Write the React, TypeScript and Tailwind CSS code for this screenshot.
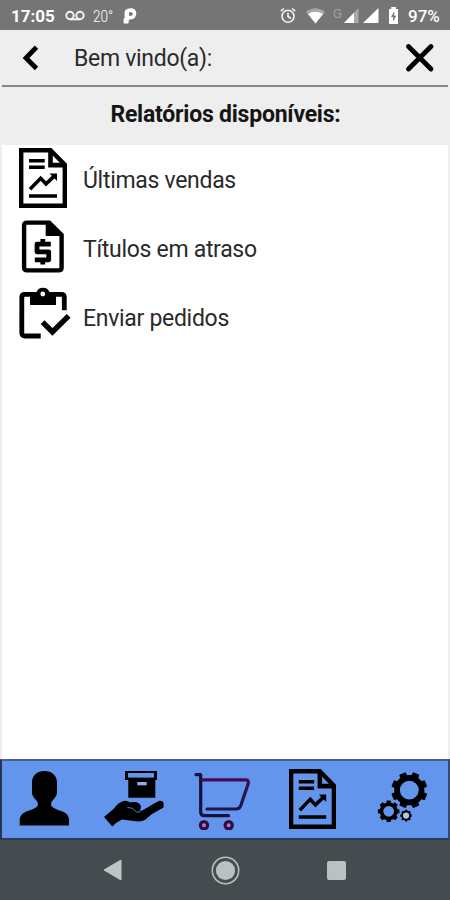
import React from 'react';

function StatusBar() {
  return (
    <div className="flex h-[30px] shrink-0 items-center bg-[#757575] pt-[2px] text-[17px] leading-none text-white">
      <span className="ml-[11px] w-[54px] font-bold">17:05</span>
      <svg className="w-[20px]" height="12" viewBox="0 0 20 12" fill="none" stroke="#f2f2f2" strokeWidth="2">
        <circle cx="5" cy="5.5" r="3.7" />
        <circle cx="15" cy="5.5" r="3.7" />
        <path d="M5 9.3H15" />
      </svg>
      <span className="ml-[8px] w-[30px] origin-left scale-x-[0.8] text-[17px] font-light">20°</span>
      <svg width="14" height="18" viewBox="0 0 14 18">
        <path d="M2.5 3Q5 .8 9 1.2Q13.6 2.2 13.3 7Q12.7 12 7.5 12.6H6L5.4 16.4H.6V12Q1.5 11.5 1.6 10V5Q1.7 3.8 2.5 3Z" fill="#fff" />
        <path d="M6 5.2H8A1.7 1.7 0 0 1 8 8.8H6Z" fill="#757575" />
      </svg>
      <svg className="ml-auto" width="16" height="18" viewBox="0 0 16 18" fill="none" stroke="#f4f4f4" strokeWidth="1.6">
        <circle cx="8" cy="9.3" r="6" />
        <path d="M.8 4.2L4 1.5M15.2 4.2L12 1.5M8 5.7V9.5L11 11.5" />
      </svg>
      <svg className="ml-[10px]" width="19" height="16" viewBox="0 0 19 16">
        <path d="M0 4Q9.5-3.5 19 4L9.5 15.5Z" fill="#a8a8a8" />
        <path d="M2 6Q9.5 1.5 17 6L9.5 15.5Z" fill="#fff" />
      </svg>
      <span className="ml-[8px] w-[11px] pb-[6px] text-[13px] text-[#a3a3a3]">G</span>
      <svg width="15" height="16" viewBox="0 0 15 16">
        <path d="M0 15L14.5 0V15Z" fill="#a8a8a8" />
        <path d="M0 15L10 4.7V15Z" fill="#fff" />
      </svg>
      <svg className="ml-[4px]" width="16" height="16" viewBox="0 0 16 16">
        <path d="M0 15L15.5 0V15Z" fill="#fff" />
      </svg>
      <svg className="ml-[9px]" width="11" height="18" viewBox="0 0 11 18">
        <path d="M3.2 0H7.8V2H10V17H1V2H3.2Z" fill="#fff" />
        <path d="M6.2 4.5L3 10H5.1V14.5L8.2 8.7H6.2Z" fill="#757575" />
      </svg>
      <span className="mr-[8px] ml-[9px] w-[34px] whitespace-nowrap text-[17px] font-medium">97%</span>
    </div>
  );
}

function ReportIcon({ className }: { className?: string }) {
  return (
    <svg className={className} width="48" height="60" viewBox="0 0 48 59" preserveAspectRatio="none" fill="none" stroke="#000" strokeWidth="4">
      <path d="M2.2 2.2H31.5L45.8 16.5V56.8H2.2Z" strokeWidth="4.4" />
      <path d="M31.5 3V16.8H45" strokeWidth="4.6" />
      <path d="M10 12.5H25.7M10 19H25.7M10 47.3H38" strokeWidth="3.4" />
      <path d="M11 40.5L21.7 29.8L27 35.3L35.5 27.5" strokeWidth="3.6" />
      <path d="M30.5 25H38V32.5Z" fill="#000" stroke="none" />
    </svg>
  );
}

function InvoiceIcon() {
  return (
    <svg width="44" height="54" viewBox="0 0 44 54" fill="none" stroke="#000" strokeWidth="4.4">
      <path d="M6 2.6H28.2L40.6 15V47.5Q40.6 50.4 37.7 50.4H6Q3.1 50.4 3.1 47.5V5.5Q3.1 2.6 6 2.6Z" />
      <path d="M24.7 2V16H41Z" fill="#000" stroke="none" />
      <path d="M29.8 24.2H16V31.8H27.7V39.8H13.8M21.8 19V24M21.8 39.5V44.4" strokeWidth="4.8" strokeLinejoin="round" />
    </svg>
  );
}

function ClipboardIcon() {
  return (
    <svg width="52" height="54" viewBox="0 0 52 54" fill="none" stroke="#000" strokeWidth="4.8">
      <path d="M21.7 49H6Q2.8 49 2.8 46V10.3Q2.8 7.3 6 7.3H42.3Q45.3 7.3 45.3 10.3V23.3" />
      <path d="M11 6H17.3A6.9 6.9 0 0 1 30.7 6H37V18H11Z" fill="#000" stroke="none" />
      <circle cx="23.8" cy="7" r="2.4" fill="#fff" stroke="none" />
      <path d="M23.6 35.2L33.4 45L49.7 28.8" strokeWidth="5.4" />
    </svg>
  );
}

function PersonIcon() {
  return (
    <svg width="52" height="60" viewBox="0 0 52 60">
      <path d="M25.3 1C33 1 38 5.5 38 12.5V23C37.5 27 34 29.5 32.2 32.5V35.5C34 39.5 44 40.5 47 43.5Q50 46 50 50V55.5H.7V50Q.8 46 4 43.5C7 40.5 17 39.5 18.8 35.5V32.5C17 29.5 13.5 27 13 23V12.5C13 5.5 18 1 25.3 1Z" />
    </svg>
  );
}

function HandBoxIcon() {
  return (
    <svg width="60" height="60" viewBox="0 0 60 60">
      <path d="M21 1H53V10H51.3V27.8H24.3V10H21Z" />
      <path d="M24 3H50V7.6H24Z" fill="#6495ed" />
      <path d="M33.3 12H42.7V15.3H33.3Z" fill="#8fb0e8" />
      <path d="M0 47L10 38.5L13 34.8Q17 31 22 30.7L26 32.2L32 32Q37 33.5 37 37L35.8 41.5L42.7 38L50 33.5L55.5 30.8Q59.5 30.5 59.6 34V37.5L48 44L41.5 49.5Q38 51.7 34 51.5L18 49.5L12 53L8.3 56.5Z" />
      <path d="M23.5 37.5L28.5 38.3L32.5 42L36 42" fill="none" stroke="#6495ed" strokeWidth=".8" />
    </svg>
  );
}

function CartIcon() {
  return (
    <svg width="58" height="60" viewBox="0 0 58 60" fill="none" strokeWidth="3.2" strokeLinecap="round" strokeLinejoin="round">
      <defs>
        <linearGradient id="basket" x1="8" y1="10" x2="14" y2="42" gradientUnits="userSpaceOnUse">
          <stop offset="0" stopColor="#480a58" />
          <stop offset="1" stopColor="#1c164c" />
        </linearGradient>
      </defs>
      <path d="M2 4.7H6.7V42Q6.7 45.7 10.3 45.7H34.5" stroke="#17113c" />
      <path d="M8 9.8H52Q55 10.1 54.2 13.8L46.8 35.5Q45.6 39 42.1 39H13" stroke="url(#basket)" />
      <g stroke="#330b42" strokeWidth="3.2" fill="#9b81d6">
        <circle cx="10" cy="55.2" r="3.6" />
        <circle cx="34.7" cy="55.2" r="3.6" />
      </g>
    </svg>
  );
}

function Gear({ cx, cy, outer, hole, offset, light }: { cx: number; cy: number; outer: number; hole: number; offset: number; light?: boolean }) {
  const body = outer * 0.84;
  return (
    <g transform={`translate(${cx} ${cy})`}>
      {Array.from({ length: 8 }, (_, i) => (
        <rect key={i} x={-outer * 0.2} y={-outer} width={outer * 0.4} height={outer * 0.4} rx={outer * 0.06} transform={`rotate(${i * 45 + offset})`} />
      ))}
      <circle r={(body + hole) / 2} fill={light ? '#b2c6df' : '#6495ed'} stroke="#000" strokeWidth={body - hole} />
    </g>
  );
}

function SettingsIcon() {
  return (
    <svg width="52" height="60" viewBox="0 0 52 60">
      <Gear cx={32.3} cy={20.2} outer={18} hole={9.4} offset={22.5} />
      <Gear cx={11.7} cy={41.3} outer={10.8} hole={5.4} offset={0} />
      <Gear cx={29.1} cy={45.6} outer={5.8} hole={3.1} offset={0} light />
    </svg>
  );
}

function ReportRow({ icon, label }: { icon: React.ReactNode; label: string }) {
  return (
    <li className="flex h-[69px] items-start">
      <span className="flex w-[81px] shrink-0">{icon}</span>
      <span className="pt-[18px] text-[23px] leading-[30px] tracking-[-0.3px] text-[#2a2a2a]">{label}</span>
    </li>
  );
}

export default function App() {
  return (
    <div className="flex h-[900px] w-[450px] flex-col overflow-hidden bg-[#eee] font-[Roboto,sans-serif]">
      <StatusBar />
      <header className="mx-[2px] flex h-[57px] shrink-0 items-center border-b-2 border-[#888]">
        <svg className="ml-[20px]" width="18" height="26" viewBox="0 0 18 26" fill="none" stroke="#000" strokeWidth="4.8">
          <path d="M14.5 2.2L4 13L14.5 23.5" />
        </svg>
        <span className="ml-[34px] pt-[4px] text-[23px] tracking-[-0.3px] text-[#2a2a2a]">Bem vindo(a):</span>
        <svg className="mr-[13px] ml-auto" width="30" height="30" viewBox="0 0 30 30" stroke="#000" strokeWidth="4.8" strokeLinecap="round">
          <path d="M3.5 3.5L26 26M26 3.5L3.5 26" />
        </svg>
      </header>
      <h1 className="flex h-[58px] shrink-0 items-center justify-center pb-[2px] pl-[1px] text-[23px] font-bold tracking-[-0.22px] text-[#151515]">Relatórios disponíveis:</h1>
      <main className="mx-[2px] flex-1 bg-white">
        <ul className="pt-[3px]">
          <ReportRow icon={<ReportIcon className="ml-[17px]" />} label="Últimas vendas" />
          <ReportRow icon={<span className="ml-[19px] pt-[3px]"><InvoiceIcon /></span>} label="Títulos em atraso" />
          <ReportRow icon={<span className="ml-[17px] pt-[1px]"><ClipboardIcon /></span>} label="Enviar pedidos" />
        </ul>
      </main>
      <nav className="flex h-[81px] shrink-0 items-start border-2 border-t-[#4c5f86] border-r-[#344970] border-b-[#293a5c] border-l-[#233454] bg-[#6495ed] pt-[9px]">
        <span className="ml-[17px]"><PersonIcon /></span>
        <span className="ml-[33px]"><HandBoxIcon /></span>
        <span className="ml-[30px]"><CartIcon /></span>
        <span className="-mt-px ml-[37px]"><ReportIcon className="w-[47px]" /></span>
        <span className="ml-[41px]"><SettingsIcon /></span>
      </nav>
      <footer className="flex h-[60px] shrink-0 items-center bg-[#444c50]">
        <svg className="ml-[103px]" width="20" height="22" viewBox="0 0 20 22">
          <path d="M1 11L18 1V21Z" fill="#bfc4c7" stroke="#bfc4c7" strokeLinejoin="round" />
        </svg>
        <svg className="ml-[88px]" width="30" height="30" viewBox="0 0 30 30">
          <circle cx="14.5" cy="15.5" r="13.2" fill="none" stroke="#b8bebf" strokeWidth="1.6" />
          <circle cx="14.5" cy="15.5" r="9.6" fill="#bbc1c2" />
        </svg>
        <span className="ml-[86px] h-[19px] w-[19px] rounded-[2px] bg-[#bbc1c2]" />
      </footer>
    </div>
  );
}
